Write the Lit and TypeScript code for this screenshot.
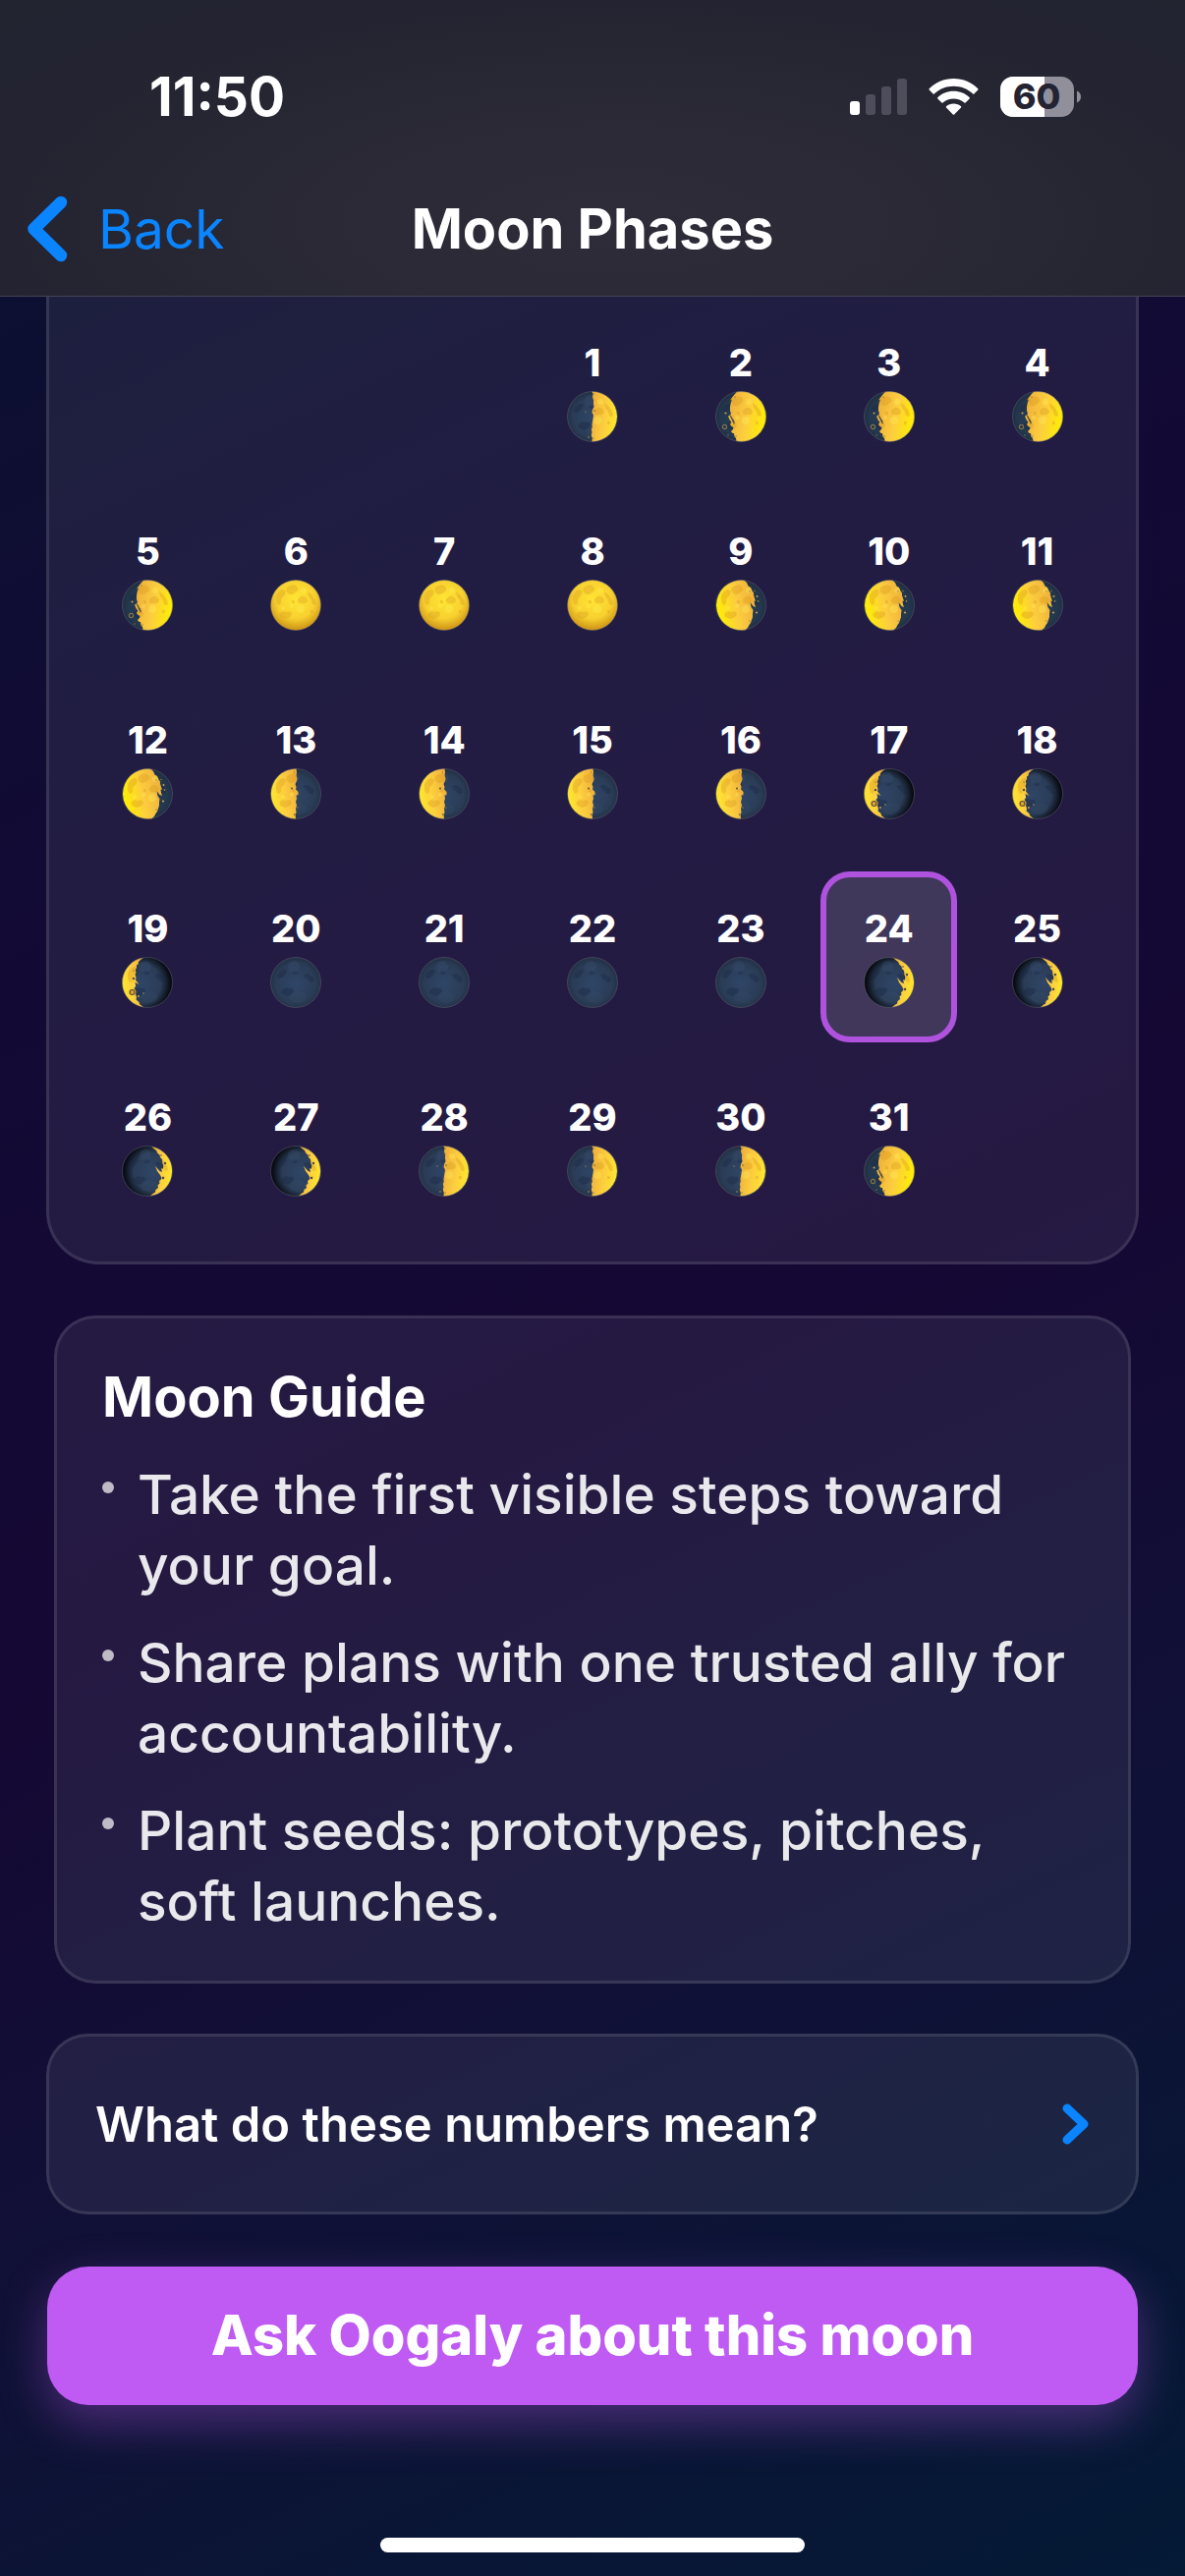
import { LitElement, html, svg, css } from "lit";
import { customElement, property, state } from "lit/decorators.js";
import { classMap } from "lit/directives/class-map.js";

type Phase =
  | "new"
  | "waxing-crescent"
  | "first-quarter"
  | "waxing-gibbous"
  | "full"
  | "waning-gibbous"
  | "last-quarter"
  | "waning-crescent";

/* Sunlit part of the disc for each phase, on a 52-unit canvas. */
const LIT: Record<Phase, string> = {
  new: "",
  full: "M26 .5A25.5 25.5 0 1 1 26 51.5A25.5 25.5 0 1 1 26 .5Z",
  "waxing-crescent":
    "M30 .9L33 3.500L35 5L36.500 8L38.500 9.500L39 12L41 14L41.500 18L42.500 21L41.500 24L40 23L41 27L38.500 26L34 21L36 26L39 30L40.500 33L39.500 35L38 36L38.500 38.500L36.500 40.500L37 43L34.500 45L34 47.500L31.500 49L29 51.300A25.500 25.500 0 0 0 30 .9Z",
  "first-quarter":
    "M25.500 .5L26.500 3L26 6L27 9L27 13L27.500 16L26 19L25.500 22L27 24.500L26.500 28L26 31L25.500 34L25.800 37L24.800 39L25.500 42L24.800 45L25.800 48L25.500 51.500A25.500 25.500 0 0 0 25.500 .5Z",
  "waxing-gibbous":
    "M22 .8L19.500 3.500L17.500 6L15 9.500L17 8.500L15.800 12L15 16L15 20L16 23L14.500 25L13 25.500L14.500 29L16.500 32L15 33.500L16 35.500L18.500 37L18 39L16 41L17.500 43L19 43L19.500 46.500L21 48L21.500 51A25.500 25.500 0 1 0 22 .8Z",
  "waning-gibbous":
    "M29.500 .7L32 3L33.500 6.500L36 8L37.500 11.500L39 13.500L39 16L40 19L41 22L39.500 21.500L40 25L41 28L38.500 27L35.500 23L36.500 28L38.500 31L38 35L38 38L37 41L36 44L34.500 46L33 49L30.500 51.200A25.500 25.500 0 1 1 29.500 .7Z",
  "last-quarter":
    "M26.500 .5L27 4L26.500 7L27.500 11L26.500 14L25.500 16L26.500 19L26 21.500L28.500 24L28.500 27L26.500 27.500L27 31L26 34L27 38L26 41L26.500 45L25.500 47L26 51.500A25.500 25.500 0 0 1 26.500 .5Z",
  "waning-crescent":
    "M22 .8L19 3L17 5L16.500 7.500L15 8.500L15 11L13.800 13L14.500 16L13.500 18L14.500 21L14 23.500L17.500 28L13.500 26L14 30L12.500 32L14.500 35L14 38L15 41L14.500 43.500L17.500 46L18 48L22 51.200A25.500 25.500 0 0 1 22 .8Z",
};

/* Loose islands of light and shadow along the terminator. */
const LIGHT_SPECKS: Record<Phase, number[][]> = {
  new: [],
  full: [],
  "waxing-crescent": [],
  "first-quarter": [[19, 21, 0.6], [22, 47, 0.7]],
  "waxing-gibbous": [[10.5, 22.5, 1], [13, 45, 0.6]],
  "waning-gibbous": [[42, 33.5, 1.1], [42.5, 17, 0.9], [43.5, 22, 0.8], [40, 11.5, 0.6]],
  "last-quarter": [[28, 40, 0.6]],
  "waning-crescent": [[17, 40, 0.9], [22, 37, 0.7]],
};
const DARK_SPECKS: Record<Phase, number[][]> = {
  new: [],
  full: [],
  "waxing-crescent": [[42, 33, 1.2], [44, 18, 1.2], [40, 10, 0.8]],
  "first-quarter": [[28, 20, 0.7], [27, 3, 0.6], [27, 48, 0.6]],
  "waxing-gibbous": [[18, 30, 0.9], [20, 6, 0.6], [21, 46, 0.6]],
  "waning-gibbous": [[35, 12, 0.6], [35, 42, 0.5]],
  "last-quarter": [[22, 20.5, 0.9], [24.5, 47, 0.7], [24.5, 4, 0.5]],
  "waning-crescent": [[12, 22, 1.2], [12, 14, 0.6]],
};

@customElement("moon-icon")
export class MoonIcon extends LitElement {
  @property() phase: Phase = "new";

  static styles = css`
    :host {
      display: block;
      width: 52px;
      height: 52px;
    }
    .disc {
      display: block;
      width: 100%;
      height: 100%;
    }
  `;

  private dots(list: number[][], fill: string) {
    return list.map(([x, y, r]) => svg`<circle cx=${x} cy=${y} r=${r} fill=${fill} />`);
  }

  render() {
    const p = this.phase;
    const full = p === "full";
    const waxing = p.startsWith("waxing") || p === "first-quarter";
    const crescent = p.endsWith("crescent");
    const gibbous = p.endsWith("gibbous");
    return html`<svg class="disc" viewBox="0 0 52 52" aria-hidden="true">
      <defs>
        <radialGradient id="night" cx=${crescent ? (waxing ? "62%" : "38%") : "50%"} cy="52%" r="60%">
          <stop offset="0" stop-color=${gibbous ? "#26405c" : "#304668"} />
          <stop offset=".65" stop-color=${gibbous ? "#24384e" : "#2a3c56"} />
          <stop offset="1" stop-color=${crescent ? "#05080e" : "#1c2838"} />
        </radialGradient>
        <radialGradient id="fullday" cx="50%" cy="38%" r="64%">
          <stop offset="0" stop-color="#ffe535" />
          <stop offset=".6" stop-color="#f8d130" />
          <stop offset="1" stop-color="#c98d12" />
        </radialGradient>
        <linearGradient id="day" x1=${waxing ? "0" : "1"} x2=${waxing ? "1" : "0"} y1=".35" y2=".6">
          <stop offset="0" stop-color="#eeb03c" />
          <stop offset=".5" stop-color="#fccd40" />
          <stop offset="1" stop-color=${gibbous ? "#fff000" : "#ffe72c"} />
        </linearGradient>
        <clipPath id="lit"><path d=${LIT[p]} /></clipPath>
      </defs>
      <circle cx="26" cy="26" r="25.5" fill="url(#night)" />
      <g fill="#1a2844" opacity=".38">
        <path d="M8 17q4-5 8-4q2 3-1 5q-2 3-5 4q-4 0-2-5z" />
        <path d="M12 34q3-4 7-2q4-1 5 2q-1 4-4 5q-4 2-6-1q-4-1-2-4z" />
        <path d="M34 18q3-2 6 0l4 3q2 3-1 5q-4 0-5-3q-3-1-4-5z" />
        <path d="M22 14q4-1 6 1q0 3-3 3q-3-1-3-4z" />
      </g>
      <circle cx="24" cy="10" r="6" fill="#41587c" opacity=".25" />
      <ellipse cx="28" cy="41" rx="9" ry="6" fill="#3c5370" opacity=".2" />
      ${LIT[p]
        ? svg`<path d=${LIT[p]} fill=${full ? "url(#fullday)" : "url(#day)"} />
      <g clip-path="url(#lit)" fill="#d79a20" opacity=${full ? 0.34 : 0.36}>
        <path d="M6 16q3-6 7-6q4 1 2 5l-4 5q1 4-2 6q-4-1-3-10z" />
        <path d="M17 8q5-4 9-2q4 3 1 6q-4 4-7 3q-5-2-3-7z" />
        <path d="M28 20q3-4 6-3q4 1 4 5q-2 3-5 2q-6 1-5-4z" />
        <path d="M38 12q5 3 7 7q3 5 1 7q-4 0-4-5q-4-4-4-9z" />
        <path d="M10 34q3-3 6-1q4-2 6 1q0 4-4 5q-3 2-5 0q-5-1-3-5z" />
        <path d="M41 31q3-1 3 2q-1 2-3 1z" />
        <path d="M22 21q3-1 3 3q-4 1-3-3z" />
      </g>
      <g clip-path="url(#lit)" fill="#fff45c" opacity=".3">
        <circle cx="22" cy="27" r="2" /><circle cx="31" cy="30" r="4" /><circle cx="34" cy="11" r="3" />
        <circle cx="13" cy="29" r="2" />
      </g>`
        : null}
      ${this.dots(LIGHT_SPECKS[p], "#cfa24a")} ${this.dots(DARK_SPECKS[p], "#4c4a42")}
      ${p === "waxing-gibbous"
        ? svg`<circle cx="9.500" cy="36.500" r="2.200" fill="none" stroke="#b08d48" stroke-width=".9" />
            <path d="M15.500 24l4.500 8l-1 2l-4-8z" fill="#5d5440" />`
        : null}
      ${p === "waning-crescent"
        ? svg`<circle cx="10.500" cy="36" r="2.500" fill="#d9a636" stroke="#574a34" stroke-width="1.100" />`
        : null}
      <circle cx="26" cy="26" r="25.5" fill="none" stroke="#6a6a78" stroke-opacity=".45" stroke-width="1" />
    </svg>`;
  }
}

const span = (from: number, to: number, phase: Phase) =>
  Array.from({ length: to - from + 1 }, (_, i) => ({ day: from + i, phase }));

const DAYS: { day: number; phase: Phase }[] = [
  ...span(1, 1, "first-quarter"),
  ...span(2, 5, "waxing-gibbous"),
  ...span(6, 8, "full"),
  ...span(9, 12, "waning-gibbous"),
  ...span(13, 16, "last-quarter"),
  ...span(17, 19, "waning-crescent"),
  ...span(20, 23, "new"),
  ...span(24, 27, "waxing-crescent"),
  ...span(28, 30, "first-quarter"),
  ...span(31, 31, "waxing-gibbous"),
];

const GUIDE = [
  "Take the first visible steps toward your goal.",
  "Share plans with one trusted ally for accountability.",
  "Plant seeds: prototypes, pitches, soft launches.",
];

@customElement("app-root")
export class AppRoot extends LitElement {
  @state() private selected = 24;

  static styles = css`
    :host {
      display: flex;
      flex-direction: column;
      box-sizing: border-box;
      min-height: 100vh;
      color: #fff;
      font-family: Inter, "Liberation Sans", sans-serif;
      background: linear-gradient(155deg, #09122f 0%, #120b35 28%, #150834 54%, #111036 72%, #041a35 100%);
    }
    button {
      margin: 0;
      border: 0;
      padding: 0;
      background: none;
      color: inherit;
      font: inherit;
      cursor: pointer;
    }
    .top {
      border-bottom: 1px solid #444254;
      background: radial-gradient(ellipse at 52% 75%, #2e2c38 0%, #2a2935 35%, #232331 75%, #222430 100%);
    }
    .status {
      display: flex;
      justify-content: space-between;
      align-items: center;
      height: 196px;
      box-sizing: border-box;
      padding: 0 104px 0 152px;
    }
    .time {
      font-size: 55px;
      line-height: 60px;
      font-weight: 700;
    }
    .indicators {
      display: flex;
      align-items: center;
      gap: 22px;
    }
    .signal, .wifi, .battery, .chevron { display: block; }
    .nav {
      display: grid;
      grid-template-columns: 1fr auto 1fr;
      align-items: center;
      align-content: start;
      height: 105px;
      padding: 0 27px;
      box-sizing: border-box;
    }
    .back {
      display: flex;
      align-items: center;
      justify-self: start;
      gap: 30px;
      color: #0a84ff;
      font-size: 55px;
      line-height: 74px;
    }
    .title {
      margin: 0;
      font-size: 56px;
      line-height: 74px;
      font-weight: 700;
    }
    .content {
      display: flex;
      flex-direction: column;
      padding: 0 47px;
    }
    .card {
      border: 3px solid rgba(255, 255, 255, 0.1);
      background: rgba(255, 255, 255, 0.07);
      box-sizing: border-box;
    }
    .calendar {
      display: grid;
      grid-template-columns: repeat(7, 1fr);
      gap: 18px 12px;
      padding: 9px 31px 31px;
      border-top: 0;
      border-radius: 0 0 54px 54px;
    }
    .day {
      display: flex;
      flex-direction: column;
      align-items: center;
      gap: 6px;
      height: 174px;
      box-sizing: border-box;
      padding-top: 29px;
      border: 6px solid transparent;
      border-radius: 30px;
      font-size: 38px;
      line-height: 46px;
      font-weight: 800;
    }
    .day:first-child { grid-column-start: 4; }
    .selected {
      border-color: #af52de;
      background: rgba(255, 255, 255, 0.13);
    }
    .guide {
      margin: 52px 8px 0;
      padding: 44px 46px 21px;
      border-radius: 42px;
    }
    .heading {
      margin: 0;
      font-size: 56px;
      line-height: 72px;
      font-weight: 700;
    }
    .tips {
      display: flex;
      flex-direction: column;
      gap: 27px;
      margin: 0;
      padding: 27px 0 24px;
      list-style: none;
    }
    .tip {
      display: flex;
      gap: 24px;
      font-size: 55px;
      line-height: 72px;
      font-weight: 500;
      color: rgba(255, 255, 255, 0.9);
    }
    .bullet {
      flex: none;
      width: 12px;
      height: 12px;
      margin-top: 23px;
      border-radius: 50%;
      background: rgba(255, 255, 255, 0.7);
    }
    .question {
      display: flex;
      justify-content: space-between;
      align-items: center;
      height: 184px;
      margin-top: 51px;
      padding: 0 47px;
      border-radius: 42px;
      font-size: 49px;
      font-weight: 600;
    }
    .ask {
      height: 141px;
      margin: 53px 1px 0;
      padding-bottom: 2px;
      border-radius: 42px;
      background: #bf5af2;
      box-shadow: 0 18px 48px rgba(191, 90, 242, 0.35);
      font-size: 56px;
      font-weight: 800;
    }
    .home {
      width: 432px;
      height: 15px;
      margin: auto auto 24px;
      border-radius: 8px;
      background: #fff;
    }
  `;

  private renderStatus() {
    return html`<div class="status">
      <span class="time">11:50</span>
      <div class="indicators">
        <svg class="signal" width="58" height="41" viewBox="0 0 58 41" role="img" aria-label="Signal">
          <rect x="0" y="25" width="10" height="14" rx="3" fill="#fff" />
          <g fill="#4e4d5b">
            <rect x="16" y="18" width="10" height="21" rx="3" />
            <rect x="32" y="10" width="10" height="29" rx="3" />
            <rect x="48" y="2" width="10" height="37" rx="3" />
          </g>
        </svg>
        <svg class="wifi" width="51" height="41" viewBox="0 0 51 41" role="img" aria-label="Wi-Fi">
          <g fill="#fff">
            <path d="M25.5 2C35.5 2 44 6 50.300 12.200Q50.800 12.800 50.300 13.400L46.400 17.600Q45.800 18.200 45.200 17.600C39.800 12.500 33 9.800 25.500 9.800S11.200 12.500 5.800 17.600Q5.200 18.200 4.600 17.600L.7 13.400Q.2 12.800 .7 12.200C7 6 15.500 2 25.500 2Z" />
            <path d="M25.500 14.800C32 14.800 37.500 17.200 41.700 21.200Q42.200 21.800 41.700 22.400L37.600 26.500Q37 27 36.400 26.500C33.400 23.900 29.700 22.500 25.500 22.500S17.600 23.900 14.600 26.500Q14 27 13.400 26.500L9.300 22.400Q8.800 21.800 9.300 21.200C13.500 17.200 19 14.800 25.500 14.800Z" />
            <path d="M25.500 27.500C28.500 27.500 31 28.500 33 30.200Q33.500 30.800 33 31.400L26.200 38.500Q25.500 39.200 24.800 38.500L18 31.400Q17.500 30.800 18 30.200C20 28.500 22.500 27.500 25.500 27.500Z" />
          </g>
        </svg>
        <svg class="battery" width="84" height="53" viewBox="0 -6 84 53" role="img" aria-label="Battery 60 percent">
          <defs><clipPath id="shell"><rect width="75" height="41" rx="13" /></clipPath></defs>
          <g clip-path="url(#shell)">
            <rect width="75" height="41" fill="#918f9a" />
            <rect width="45" height="41" fill="#fff" />
          </g>
          <path d="M78 14.500C80.500 15.500 82 17.500 82 20.500S80.500 25.500 78 26.500Z" fill="#918f9a" />
          <text x="37" y="33" text-anchor="middle" fill="#242331" font-family="Inter, sans-serif" font-size="36" font-weight="800">60</text>
        </svg>
      </div>
    </div>`;
  }

  render() {
    return html`
      <header class="top">
        ${this.renderStatus()}
        <nav class="nav">
          <button class="back">
            <svg class="chevron" width="43" height="68" viewBox="0 0 43 68" aria-hidden="true">
              <path d="M35 7L7.500 34L35 61" fill="none" stroke="#0a84ff" stroke-width="12.500" stroke-linecap="round" stroke-linejoin="round" />
            </svg>
            Back
          </button>
          <h1 class="title">Moon Phases</h1>
        </nav>
      </header>
      <main class="content">
        <section class="card calendar" aria-label="Calendar">
          ${DAYS.map(
            ({ day, phase }) => html`<button
              class=${classMap({ day: true, selected: day === this.selected })}
              aria-pressed=${day === this.selected ? "true" : "false"}
              @click=${() => (this.selected = day)}
            >
              <span>${day}</span>
              <moon-icon .phase=${phase}></moon-icon>
            </button>`
          )}
        </section>
        <section class="card guide">
          <h2 class="heading">Moon Guide</h2>
          <ul class="tips">
            ${GUIDE.map((text) => html`<li class="tip"><span class="bullet"></span><span>${text}</span></li>`)}
          </ul>
        </section>
        <button class="card question">
          What do these numbers mean?
          <svg class="chevron" width="28" height="42" viewBox="0 0 28 42" aria-hidden="true">
            <path d="M5 5L22 21L5 37" fill="none" stroke="#0a84ff" stroke-width="9" stroke-linecap="round" stroke-linejoin="round" />
          </svg>
        </button>
        <button class="ask">Ask Oogaly about this moon</button>
      </main>
      <div class="home"></div>
    `;
  }
}
